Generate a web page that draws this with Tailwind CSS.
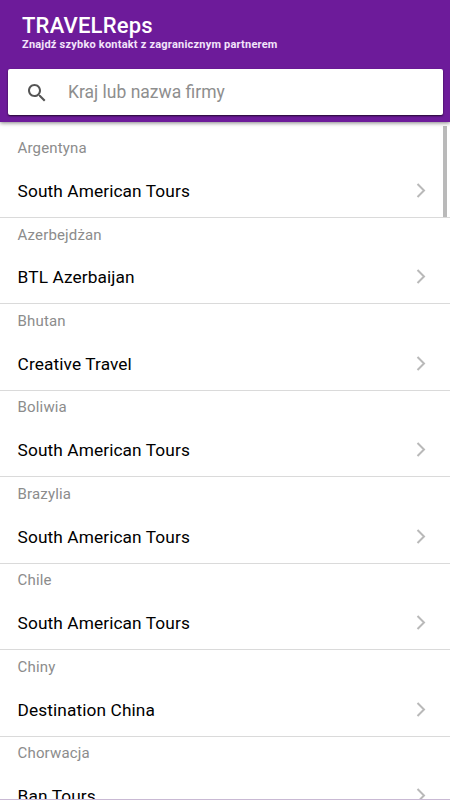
<!DOCTYPE html>
<html lang="pl">
<head>
  <meta charset="UTF-8" />
  <meta name="viewport" content="width=device-width, initial-scale=1.0" />
  <script src="https://cdn.jsdelivr.net/npm/@tailwindcss/browser@4"></script>
  <title>TRAVELReps</title>
</head>

<body class="relative h-[800px] overflow-hidden bg-white font-['Roboto',sans-serif] flex flex-col">

  <header class="relative z-10 h-[122px] shrink-0 bg-[#6d1b9a] px-[7.5px] pt-[13px] shadow-[0_1px_4px_rgba(0,0,0,0.5)]">
    <h1 class="pl-[14.5px] text-[22px] leading-[26px] font-medium tracking-[0.2px] text-white">TRAVELReps</h1>
    <p class="pl-[14.5px] text-[11px] leading-[12px] font-bold tracking-[0.21px] text-[#f3e4fb]">Znajdź szybko kontakt z zagranicznym partnerem</p>
    <form class="mt-[18px] h-[46px] flex items-center rounded-[2px] bg-white shadow-[0_1px_2px_rgba(0,0,0,0.7)]">
      <svg class="mt-px ml-[17px] size-6" viewBox="0 0 24 24" fill="#555">
        <path d="M15.5 14h-.79l-.28-.27C15.41 12.59 16 11.11 16 9.5 16 5.91 13.09 3 9.5 3S3 5.91 3 9.5 5.91 16 9.5 16c1.61 0 3.09-.59 4.23-1.57l.27.28v.79l5 4.99L20.49 19l-4.99-5zm-6 0C7.01 14 5 11.99 5 9.5S7.01 5 9.5 5 14 7.01 14 9.5 11.99 14 9.5 14z" />
      </svg>
      <input id="search" autocomplete="off" placeholder="Kraj lub nazwa firmy"
        class="ml-[19.5px] flex-1 text-[17.5px] leading-[22px] placeholder:text-[#8e8e8e] focus:outline-none" />
    </form>
  </header>

  <ul id="partners" class="flex-1 overflow-hidden pt-[9.6px]">
    <!-- Partners inserted here -->
  </ul>

  <!-- scroll indicator -->
  <div class="absolute top-[126px] right-[3px] h-[91px] w-1 bg-[#bababa]"></div>
  <div class="absolute bottom-0 left-0 h-px w-full bg-[#c9b9d4]"></div>

  <script>
    const partners = [
      ['Argentyna', 'South American Tours'],
      ['Azerbejdżan', 'BTL Azerbaijan'],
      ['Bhutan', 'Creative Travel'],
      ['Boliwia', 'South American Tours'],
      ['Brazylia', 'South American Tours'],
      ['Chile', 'South American Tours'],
      ['Chiny', 'Destination China'],
      ['Chorwacja', 'Ban Tours']
    ];

    const list = document.getElementById('partners');

    partners.forEach(([country, company]) => {
      const li = document.createElement('li');
      li.className = 'h-[86.43px] border-b border-[#dadada] pt-[6.5px] pl-[17.6px] pr-[24px]';
      li.innerHTML = `
        <h2 class="text-[15px] leading-5 tracking-[0.15px] text-[#8c8c8c]">${country}</h2>
        <div class="mt-[20.9px] flex items-center justify-between">
          <span class="text-[17.3px] leading-6 tracking-[0.1px] text-black">${company}</span>
          <svg class="w-[10px] h-4" viewBox="0 0 10 16" fill="none" stroke="#b9b9b9" stroke-width="2">
            <path d="M1.5 1L8 7.5L1.5 14" />
          </svg>
        </div>`;
      list.appendChild(li);
    });
  </script>
</body>
</html>
